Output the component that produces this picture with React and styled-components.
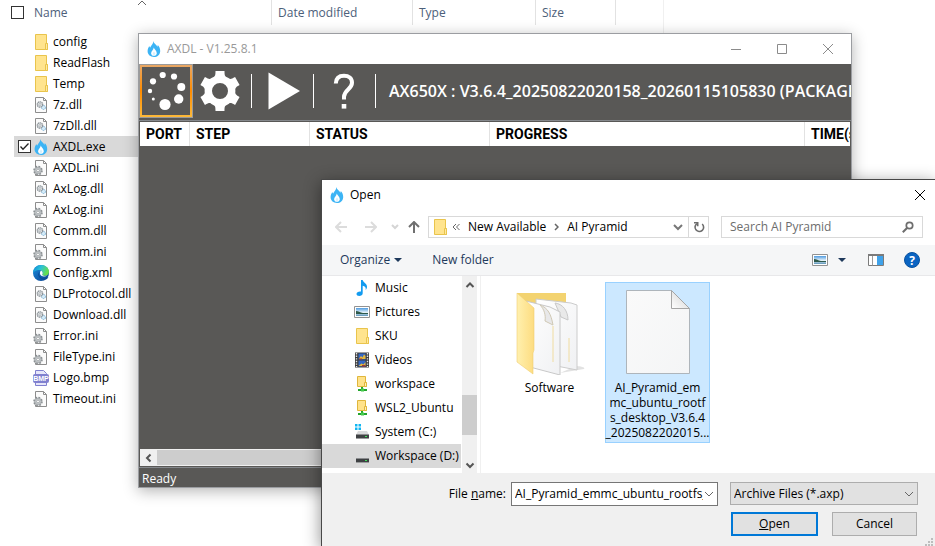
import React from "react";
import styled, { createGlobalStyle, css } from "styled-components";

const GlobalStyle = createGlobalStyle`
  * { box-sizing: border-box; }
  body {
    margin: 0;
    overflow: hidden;
    background: #fff;
    color: #000;
    font: 12px/16px "Open Sans", "Noto Sans", sans-serif;
  }
  button, input, select { font: inherit; color: inherit; margin: 0; }
  svg { display: block; flex: none; }
`;

/* ---------- Icons ---------- */

const FlameIcon = () => (
  <svg width="14" height="16" viewBox="0 0 14 16" aria-hidden="true">
    <path d="M6.2 0c.6 2.6 3.2 3.6 4.2 5.8.3-.5.4-1.200.3-1.800C12.400 5.600 13.300 8 13.200 10.200 13 13.800 10.300 16 7 16 3.500 16 .6 13.800.6 10.300.5 8 1.600 6.500 2.200 5c.3.7.6 1.200 1.100 1.600C4 4.300 6.500 3 6.200 0z" fill="#3cb4f5" />
    <path d="M6.800 6.500c.3 1.900 3 3.200 3 5.700 0 1.500-1.200 2.600-2.800 2.600s-2.900-1-2.900-2.600c0-2.200 2.500-3.300 2.700-5.700z" fill="#fff" />
    <path d="M7 10.200c.2 1 1.300 1.400 1.300 2.600 0 .7-.6 1.200-1.300 1.200s-1.300-.5-1.300-1.200c0-1.100 1.100-1.600 1.300-2.600z" fill="#d4effd" />
  </svg>
);

const FolderIcon = () => (
  <svg width="16" height="16" viewBox="0 0 16 16" aria-hidden="true">
    <path d="M2.500.5h11v9h1v6h-12z" fill="#ffe48e" stroke="#e9c44c" />
    <path d="M12.500 9.500h2v6h-2z" fill="#ffe9a2" stroke="#e9c44c" />
  </svg>
);

const Sheet = () => (
  <path d="M2.500.5h8l3 3v12h-11zM10.500.5v3h3" fill="#fbfbfb" stroke="#8d8d8d" />
);

const DllIcon = () => (
  <svg width="16" height="16" viewBox="0 0 16 16" aria-hidden="true">
    <Sheet />
    <circle cx="10.500" cy="10.500" r="2" fill="#d4ebf8" stroke="#7fb2d6" strokeDasharray="1.500 .6" />
    <circle cx="7" cy="7.500" r="2.700" fill="#e4e8ea" stroke="#8b9297" strokeWidth="1.300" strokeDasharray="1.500 .5" />
    <circle cx="7" cy="7.500" r="1" fill="#fff" stroke="#8b9297" strokeWidth=".6" />
  </svg>
);

const IniIcon = () => (
  <svg width="16" height="16" viewBox="0 0 16 16" aria-hidden="true">
    <Sheet />
    <circle cx="5" cy="10.500" r="4" fill="#c5c9cb" stroke="#8b9093" strokeWidth="1.600" strokeDasharray="1.700 1.440" />
    <circle cx="5" cy="10.500" r="3" fill="#cdd1d3" stroke="#979c9f" strokeWidth=".6" />
    <circle cx="5" cy="10.500" r="1.400" fill="#fff" stroke="#8b9093" strokeWidth=".7" />
  </svg>
);

const EdgeIcon = () => (
  <svg width="16" height="16" viewBox="0 0 16 16" aria-hidden="true">
    <defs>
      <linearGradient id="edge-top" x1="0" y1="0" x2="1" y2=".4">
        <stop offset="0" stopColor="#0a84d4" />
        <stop offset=".5" stopColor="#2bc0d8" />
        <stop offset="1" stopColor="#68e04b" />
      </linearGradient>
      <linearGradient id="edge-low" x1="0" y1="0" x2="1" y2="1">
        <stop offset="0" stopColor="#1a8ddf" />
        <stop offset="1" stopColor="#0b3f8c" />
      </linearGradient>
    </defs>
    <circle cx="8" cy="8" r="8" fill="url(#edge-low)" />
    <path d="M0 8C.3 3.400 3.700 0 8.200 0 12.700 0 16 3.200 16 6.800c0 2.500-1.900 4-4.200 4-1.600 0-2.700-.5-2.700-1.100 0-.4.600-.6.600-1.800C9.700 6.200 8.200 5 6 5 3 5 1 6.400 0 8z" fill="url(#edge-top)" />
    <path d="M6.500 7c-1.500 3 .7 6.300 4 6.400 1.900.1 3.300-.6 4.400-1.400.3-.2.500.1.300.4-.4.700-1 1.300-1.700 1.900-3 .8-6.800-.2-8-3.200C5 9.500 5.400 8 6.500 7z" fill="#0c4a96" />
    <path d="M9.700 7.900c0-1-.8-2-1.700-2.400C6.500 7 6.600 9.600 8.300 10.800c1.600 1.100 4.300.9 6.200-.3-2 .700-5.500.6-5.400-.9.200-.4.600-.5.600-1.700z" fill="#fff" />
  </svg>
);

const BmpIcon = () => (
  <svg width="16" height="16" viewBox="0 0 16 16" aria-hidden="true">
    <path d="M2.500 5V.5h8l3 3V5M2.500 13v2.500h11V13" fill="#e6e6fa" stroke="#8080cf" />
    <rect x="0" y="4" width="16" height="9" rx="2" fill="#8080cf" />
    <text x="8" y="11" textAnchor="middle" fontFamily="Liberation Sans, sans-serif" fontWeight="700" fontSize="7" fill="#fff">BMP</text>
  </svg>
);

const MusicIcon = () => (
  <svg width="16" height="16" viewBox="0 0 16 16" aria-hidden="true">
    <path d="M7 0h1.700c.2 2.500 4.300 3.300 4.300 6.700 0 1.400-.5 2.400-1.300 3.300.5-2.400-.8-3.800-3-4.200v7.400C8.700 15 7 16 5.300 16S2.500 15.200 2.500 14c0-1.600 2-2.800 4.500-2.400z" fill="#129bf0" />
  </svg>
);

const PictureIcon = () => (
  <svg width="16" height="12" viewBox="0 0 16 12" aria-hidden="true">
    <defs>
      <linearGradient id="pic-sky" x1="0" y1="0" x2="0" y2="1">
        <stop offset="0" stopColor="#4e9be0" />
        <stop offset=".55" stopColor="#e8f3fa" />
        <stop offset="1" stopColor="#5a93b8" />
      </linearGradient>
    </defs>
    <path d="M.5.5h15v11H.5z" fill="#fff" stroke="#929292" />
    <path d="M2 2h12v8H2z" fill="url(#pic-sky)" />
    <path d="M2 5c2.500 0 4 1.600 7 1.900 2 .2 3.500.1 5 .1v1H2z" fill="#2e5a4b" />
  </svg>
);

const VideoIcon = () => (
  <svg width="16" height="16" viewBox="0 0 16 16" aria-hidden="true">
    <path d="M1 .5h14v15H1z" fill="#3c3c3c" />
    <path d="M2.500 1v14M13.500 1v14" stroke="#e8e8e8" strokeWidth="1.400" strokeDasharray="1.400 1.200" />
    <path d="M4.500 1.500h7v6h-7zM4.500 8.500h7v6h-7z" fill="#3568c4" />
    <path d="M5 6.500l2-2.500 1.500 1.500L10 2.500l1.500 1.500v3H5zM5 13.500l2.500-2 2 1 2-2.500v4H5z" fill="#e6b73a" />
    <path d="M5 6.500h3v1H5zM8 13h3.500v1.500H8z" fill="#a43b30" />
  </svg>
);

const NetFolderIcon = () => (
  <svg width="16" height="16" viewBox="0 0 16 16" aria-hidden="true">
    <path d="M3.500.5h8v6h1v4h-9z" fill="#ffe28a" stroke="#e0b63c" />
    <path d="M10.500 6.500h2v4h-2z" fill="#fff0b8" stroke="#e0b63c" />
    <path d="M8 11v3M4 14h9" stroke="#23a52c" strokeWidth="2" />
    <path d="M7 12.500h3v3H7z" fill="#45c94b" />
  </svg>
);

const DriveIcon = ({ system }) => (
  <svg width="16" height="16" viewBox="0 0 16 16" aria-hidden="true">
    <path d="M4 7h9l2 4H2z" fill="#d9dadb" />
    <path d="M2 10.500h13V14H2z" fill="#3e4143" />
    <path d="M2 14h13v1H2z" fill="#9a9c9d" />
    <path d="M11 12h2v1h-2z" fill="#3fe05b" />
    {system && (
      <path d="M1 0h2.500v2.500H1zM4.500 0H7v2.500H4.500zM1 3.500h2.500V6H1zM4.500 3.500H7V6H4.500z" fill="#10b6f2" />
    )}
  </svg>
);

const CheckMark = () => (
  <svg width="11" height="11" viewBox="0 0 11 11" aria-hidden="true">
    <path d="M1.500 5.500L4 8.200 9.500 2.500" fill="none" stroke="#222" strokeWidth="1.300" />
  </svg>
);

const DotsIcon = () => (
  <svg width="48" height="48" viewBox="142 67 48 48" fill="#fff" aria-hidden="true">
    <circle cx="162.700" cy="75" r="3.100" />
    <circle cx="174" cy="76.500" r="3.100" />
    <circle cx="153" cy="81.300" r="3.100" />
    <circle cx="181.300" cy="87" r="4" />
    <circle cx="150" cy="91" r="2.200" />
    <circle cx="153.300" cy="99" r="1.500" />
    <circle cx="178.700" cy="99" r="4.700" />
    <circle cx="165" cy="104.500" r="5.600" />
  </svg>
);

const GearIcon = () => (
  <svg width="40" height="40" viewBox="-20 -20 40 40" aria-hidden="true">
    <circle r="11.700" fill="none" stroke="#fff" strokeWidth="7.400" />
    {[0, 60, 120, 180, 240, 300].map((a) => (
      <path key={a} transform={`rotate(${a})`} d="M-6.500-13.500C-4.800-15-4.500-16-4.500-20h9c0 4 .3 5 2 6.500z" fill="#fff" />
    ))}
  </svg>
);

const PlayIcon = () => (
  <svg width="36" height="38" viewBox="0 0 36 38" aria-hidden="true">
    <path d="M4.500 .500L36 19 4.500 37.500z" fill="#fff" />
  </svg>
);

const HelpIcon = () => (
  <svg width="22" height="36" viewBox="0 0 22 36" aria-hidden="true">
    <path d="M2.800 10.500C3 5.500 6 2.800 11 2.800c4.700 0 8 2.500 8 7 0 6.500-8 7-8 14.200v2.500" fill="none" stroke="#fff" strokeWidth="4" />
    <path d="M8.700 31h4.600v4.600H8.700z" fill="#fff" />
  </svg>
);

const Glyph = ({ d, w = 12, h = 12, color = "#666", weight = 1 }) => (
  <svg width={w} height={h} viewBox={`0 0 ${w} ${h}`} fill="none" stroke={color} strokeWidth={weight} aria-hidden="true">
    <path d={d} />
  </svg>
);

const chevronDown = "M2 4L6 8L10 4";

const SearchIcon = () => (
  <svg width="12" height="12" viewBox="0 0 12 12" fill="none" stroke="#6d6d6d" aria-hidden="true">
    <circle cx="7.500" cy="4.500" r="3.200" strokeWidth="1.700" />
    <path d="M5 7L.8 11.200" strokeWidth="2" />
  </svg>
);

const RefreshIcon = () => (
  <svg width="12" height="12" viewBox="0 0 12 12" fill="none" stroke="#6d6d6d" strokeWidth="1.600" aria-hidden="true">
    <path d="M9.200 3A4.300 4.300 0 1 1 4 2.600" />
    <path d="M1 1.800h3.700v3.500" />
  </svg>
);

const PaneIcon = () => (
  <svg width="16" height="12" viewBox="0 0 16 12" aria-hidden="true">
    <path d="M.5.5h15v11H.5z" fill="#fff" stroke="#7b7b7b" />
    <path d="M0 0h16v2H0z" fill="#7b7b7b" />
    <path d="M4.500 2v9.500" stroke="#9b9b9b" />
    <path d="M9 2h6v9H9z" fill="#3fa2ea" />
  </svg>
);

const HelpBadge = () => (
  <svg width="16" height="16" viewBox="0 0 16 16" aria-hidden="true">
    <circle cx="8" cy="8" r="7.500" fill="#0a64c2" stroke="#08519f" />
    <text x="8" y="12.500" textAnchor="middle" fontFamily="Open Sans, sans-serif" fontWeight="700" fontSize="12" fill="#fff">?</text>
  </svg>
);

const OpenFolderArt = () => (
  <svg width="70" height="86" viewBox="-1 -4 70 86" aria-hidden="true">
    <defs>
      <linearGradient id="flap" x1="0" y1="0" x2="1" y2="0">
        <stop offset="0" stopColor="#fff0ae" />
        <stop offset="1" stopColor="#fddc80" />
      </linearGradient>
      <linearGradient id="paper" x1="0" y1="0" x2="1" y2="1">
        <stop offset="0" stopColor="#fff" />
        <stop offset="1" stopColor="#f0f1f3" />
      </linearGradient>
    </defs>
    <path d="M44 80l24-4c2-2-6-3-8-3z" fill="#e2e2e2" />
    <path d="M1 0h49v68H1z" fill="#f3d370" />
    <path d="M20 6l35 4 6 2v65l-41-8z" fill="url(#paper)" stroke="#ccc" />
    <path d="M39 10c8 1 13 8 13 17l-7-3z" fill="#e9e9e9" stroke="#c9c9c9" />
    <path d="M53 45v24" stroke="#f0dca0" />
    <path d="M10 8l24 6 10 5v63L10 73z" fill="url(#paper)" stroke="#c8c8c8" />
    <path d="M24 12c8 3 11 9 13 20l-8-4c1-6-1-12-5-16z" fill="#e8e8e9" stroke="#d0c9b5" />
    <path d="M37 33v36" stroke="#f0dca0" />
    <path d="M1 0l17 15v42l-1 3v21L1 69z" fill="url(#flap)" stroke="#f0ce72" strokeWidth=".6" />
  </svg>
);

const BlankFileArt = () => (
  <svg width="64" height="86" viewBox="0 0 64 86" aria-hidden="true">
    <defs>
      <linearGradient id="sheet" x1="0" y1="0" x2="1" y2="1">
        <stop offset="0" stopColor="#fafafa" />
        <stop offset="1" stopColor="#f4f5f6" />
      </linearGradient>
      <linearGradient id="fold" x1="0" y1="1" x2="1" y2="0">
        <stop offset="0" stopColor="#fff" />
        <stop offset="1" stopColor="#cfcfcf" />
      </linearGradient>
    </defs>
    <path d="M.5 1.500h45l18 18v65H.5z" fill="url(#sheet)" stroke="#aeb5bb" />
    <path d="M45.500 1.500v18h18z" fill="url(#fold)" stroke="#a5a5a5" />
  </svg>
);

/* ---------- Explorer ---------- */

const Desktop = styled.main`
  position: relative;
  min-height: 100vh;
  overflow: hidden;
`;

const ExplorerPane = styled.section`
  width: 71%;
  min-height: 100vh;
  border-right: 1px solid #f0f0f0;
`;

const FileTable = styled.table`
  width: 616px;
  table-layout: fixed;
  border-collapse: collapse;
  th, td { padding: 0; text-align: left; font-weight: 400; }
  th { height: 31px; vertical-align: top; }
`;

const ColumnTitle = styled.div`
  display: flex;
  align-items: center;
  height: 25px;
  gap: 10px;
  padding-left: ${(p) => (p.$first ? "11px" : "6px")};
  border-right: 1px solid #e2e2e2;
  color: #4c607a;
`;

const SortCaret = styled.span`
  position: absolute;
  left: 137px;
  top: 0;
`;

const CheckLabel = styled.label`
  display: grid;
  place-items: center;
  width: 13px;
  height: 13px;
  > * { grid-area: 1 / 1; }
  svg { pointer-events: none; }
`;

const TickBox = styled.input`
  appearance: none;
  width: 13px;
  height: 13px;
  border: 1px solid #333;
  background: #fff;
`;

const FileCell = styled.div`
  display: flex;
  align-items: center;
  height: 21px;
  padding-left: ${(p) => (p.$selected ? "4px" : "19px")};
  background: ${(p) => (p.$selected ? "#d9d9d9" : "transparent")};
  gap: 4px;
  ${CheckLabel} { margin-right: -2px; }
`;

const FlameSlot = styled.span`
  display: grid;
  place-items: center;
  width: 16px;
`;

const FileFlame = () => <FlameSlot><FlameIcon /></FlameSlot>;

const files = [
  ["config", FolderIcon], ["ReadFlash", FolderIcon], ["Temp", FolderIcon],
  ["7z.dll", DllIcon], ["7zDll.dll", DllIcon], ["AXDL.exe", FileFlame, true],
  ["AXDL.ini", IniIcon], ["AxLog.dll", DllIcon], ["AxLog.ini", IniIcon],
  ["Comm.dll", DllIcon], ["Comm.ini", IniIcon], ["Config.xml", EdgeIcon],
  ["DLProtocol.dll", DllIcon], ["Download.dll", DllIcon], ["Error.ini", IniIcon],
  ["FileType.ini", IniIcon], ["Logo.bmp", BmpIcon], ["Timeout.ini", IniIcon],
];

const Tick = ({ label, checked }) => (
  <CheckLabel>
    <TickBox type="checkbox" aria-label={label} defaultChecked={checked} />
    {checked && <CheckMark />}
  </CheckLabel>
);

const Explorer = () => (
  <ExplorerPane>
    <FileTable>
      <colgroup>
        <col width="14" /><col width="258" /><col width="141" /><col width="123" /><col width="80" />
      </colgroup>
      <thead>
        <tr>
          <th colSpan={2}>
            <ColumnTitle $first><Tick label="Select all" />Name</ColumnTitle>
            <SortCaret><Glyph w={10} h={6} d="M1 5L5 1L9 5" /></SortCaret>
          </th>
          <th><ColumnTitle>Date modified</ColumnTitle></th>
          <th><ColumnTitle>Type</ColumnTitle></th>
          <th><ColumnTitle>Size</ColumnTitle></th>
        </tr>
      </thead>
      <tbody>
        {files.map(([name, Icon, selected]) => (
          <tr key={name}>
            <td />
            <td>
              <FileCell $selected={selected}>
                {selected && <Tick label={`Select ${name}`} checked />}
                <Icon />
                {name}
              </FileCell>
            </td>
          </tr>
        ))}
      </tbody>
    </FileTable>
  </ExplorerPane>
);

/* ---------- AXDL window ---------- */

const AppWindow = styled.section`
  position: absolute;
  left: 138px;
  right: 83px;
  top: 33px;
  height: 455px;
  display: flex;
  flex-direction: column;
  border: 1px solid #9b9da1;
  background: #595856;
  box-shadow: 0 3px 14px rgba(0, 0, 0, 0.3);
`;

const TitleBar = styled.header`
  display: flex;
  align-items: center;
  flex: none;
  height: 30px;
  padding-left: 8px;
  gap: 6px;
  background: #fff;
  color: ${(p) => (p.$inactive ? "#999" : "#000")};
`;

const Grow = styled.span`
  flex: 1;
`;

const CaptionButtons = styled.div`
  display: flex;
`;

const CaptionButton = styled.button`
  display: grid;
  place-items: center;
  width: ${(p) => (p.$narrow ? "30px" : "46px")};
  height: 30px;
  padding: 0;
  border: 0;
  background: none;
`;

const ToolStrip = styled.div`
  display: flex;
  flex: none;
  height: 57px;
  border-bottom: 1px solid #85888c;
`;

const ToolButton = styled.button`
  display: grid;
  place-items: center;
  width: 54px;
  height: 54px;
  padding: 0;
  border: 0;
  background: none;
  ${(p) => p.$active && css`
    border: 3px solid;
    border-image: linear-gradient(#e8a868, #ff8c00 50%, #fdbb3c) 3;
    outline: 1px solid #9a9a9a;
    outline-offset: -1px;
  `}
`;

const ToolDivider = styled.span`
  width: 1px;
  height: 34px;
  margin: 10px 3px 0 4px;
  background: #fff;
`;

const PackageTitle = styled.div`
  flex: 1;
  min-width: 0;
  padding-left: 10px;
  overflow: hidden;
  white-space: nowrap;
  color: #fff;
  font-size: 16px;
  line-height: 54px;
  font-weight: 600;
`;

const GridFrame = styled.div`
  flex: 1;
  display: flex;
  flex-direction: column;
  margin: 1px 1px 0;
  overflow: hidden;
`;

const PortTable = styled.table`
  width: 100%;
  table-layout: fixed;
  border-collapse: separate;
  border-spacing: 0;
  background: #fff;
  th {
    height: 24px;
    padding: 0 0 0 6px;
    border-right: 1px solid #e2e2e2;
    text-align: left;
    overflow: hidden;
    white-space: nowrap;
    font: 700 14px/24px Roboto, sans-serif;
  }
  th:last-child { border-right: 0; }
`;

const BottomScroll = styled.div`
  display: flex;
  height: 17px;
  margin-top: auto;
  background: #cdcdcd;
  border-top: 1px solid #f0f0f0;
  border-bottom: 1px solid #f0f0f0;
`;

const ScrollButton = styled.button`
  display: grid;
  place-items: center;
  flex: none;
  width: ${(p) => (p.$tall ? "15px" : "17px")};
  height: ${(p) => (p.$tall ? "17px" : "15px")};
  padding: 0;
  border: 0;
  background: #f0f0f0;
`;

const StatusBar = styled.footer`
  flex: none;
  height: 20px;
  margin-top: 1px;
  padding-left: 3px;
  border-top: 1px solid #85888c;
  color: #fff;
  line-height: 22px;
`;

const AxdlWindow = () => (
  <AppWindow aria-label="AXDL">
    <TitleBar $inactive>
      <FlameIcon />
      AXDL - V1.25.8.1
      <Grow />
      <CaptionButtons>
        <CaptionButton aria-label="Minimize"><Glyph d="M1 6.500h10" color="#8b8b8b" /></CaptionButton>
        <CaptionButton aria-label="Maximize"><Glyph d="M1.500 1.500h9v9h-9z" color="#8b8b8b" /></CaptionButton>
        <CaptionButton aria-label="Close"><Glyph d="M1 1l10 10M11 1L1 11" color="#8b8b8b" /></CaptionButton>
      </CaptionButtons>
    </TitleBar>
    <ToolStrip>
      <ToolButton $active aria-label="Load package"><DotsIcon /></ToolButton>
      <ToolButton aria-label="Settings"><GearIcon /></ToolButton>
      <ToolDivider />
      <ToolButton aria-label="Start"><PlayIcon /></ToolButton>
      <ToolDivider />
      <ToolButton aria-label="Help"><HelpIcon /></ToolButton>
      <ToolDivider />
      <PackageTitle>AX650X : V3.6.4_20250822020158_20260115105830 (PACKAGE)</PackageTitle>
    </ToolStrip>
    <GridFrame>
      <PortTable>
        <colgroup>
          <col width="50" /><col width="120" /><col width="180" /><col /><col width="45" />
        </colgroup>
        <thead>
          <tr><th>PORT</th><th>STEP</th><th>STATUS</th><th>PROGRESS</th><th>TIME(s)</th></tr>
        </thead>
      </PortTable>
      <BottomScroll>
        <ScrollButton aria-label="Scroll left"><Glyph d="M7.500 2.500L4 6L7.500 9.500" weight={2} color="#555" /></ScrollButton>
      </BottomScroll>
    </GridFrame>
    <StatusBar>Ready</StatusBar>
  </AppWindow>
);

/* ---------- Open dialog ---------- */

const Dialog = styled.section`
  position: absolute;
  left: 321px;
  right: 0;
  top: 179px;
  bottom: 0;
  display: flex;
  flex-direction: column;
  border: 1px solid #484848;
  border-width: 1px 0 0 1px;
  background: #fff;
  box-shadow: 0 4px 16px rgba(0, 0, 0, 0.45);
`;

const NavRow = styled.div`
  display: grid;
  grid-template-columns: 97px minmax(0, 281fr) 12px minmax(0, 202fr);
  flex: none;
  height: 22px;
  margin: 6px 12px 7px 9px;
`;

const History = styled.div`
  display: grid;
  grid-template-columns: 20px 40px 8px 29px;
`;

const NavButton = styled.button`
  display: grid;
  place-items: center;
  min-width: 0;
  height: 22px;
  padding: 0;
  border: 0;
  background: none;
`;

const AddressBar = styled.div`
  display: flex;
  align-items: center;
  height: 22px;
  padding-left: 3px;
  border: 1px solid #d9d9d9;
`;

const Crumb = styled.button`
  padding: 0 4px;
  border: 0;
  background: none;
  white-space: nowrap;
`;

const CrumbChevron = styled.span`
  padding: 0 4px;
`;

const AddressButton = styled(NavButton)`
  width: 20px;
  height: 20px;
  border-left: ${(p) => (p.$divided ? "1px solid #d9d9d9" : "0")};
`;

const SearchBox = styled.label`
  display: flex;
  align-items: center;
  grid-column: 4;
  height: 22px;
  padding: 0 8px;
  border: 1px solid #d9d9d9;
`;

const PlainInput = styled.input`
  flex: 1;
  min-width: 0;
  padding: 0;
  border: 0;
  outline: 0;
  background: none;
  &::placeholder { color: #6d6d6d; opacity: 1; }
`;

const CommandBar = styled.div`
  display: flex;
  align-items: center;
  flex: none;
  height: 31px;
  padding: 0 15px 0 18px;
  background: #f5f6f7;
  border-bottom: 1px solid #e8e8ea;
  color: #1e395b;
`;

const Command = styled.button`
  display: flex;
  align-items: center;
  gap: 4px;
  padding: 0;
  margin-right: ${(p) => (p.$gap ? `${p.$gap}px` : "0")};
  border: 0;
  background: none;
`;

const Triangle = () => (
  <svg width="8" height="4" viewBox="0 0 8 4" aria-hidden="true"><path d="M0 0h8L4 4z" fill="#1e395b" /></svg>
);

const Browser = styled.div`
  display: flex;
  flex: none;
  height: 197px;
`;

const Tree = styled.ul`
  width: 139px;
  margin: 0;
  padding: 0;
  list-style: none;
`;

const TreeItem = styled.li`
  display: flex;
  align-items: center;
  height: 24px;
  padding-left: 32px;
  gap: 5px;
  white-space: nowrap;
  background: ${(p) => (p.$selected ? "#d9d9d9" : "transparent")};
`;

const TreeScroll = styled.div`
  display: flex;
  flex-direction: column;
  width: 15px;
  margin-left: 1px;
  background: #f0f0f0;
`;

const TreeThumb = styled.div`
  height: 40px;
  margin: auto 0 21px;
  background: #cdcdcd;
`;

const FileGrid = styled.div`
  display: flex;
  flex: 1;
  align-items: flex-start;
  gap: 3px;
  margin-left: 3px;
  padding: 6px 0 0 16px;
  border-left: 1px solid #f0f0f0;
`;

const Tile = styled.button`
  display: flex;
  flex-direction: column;
  align-items: center;
  width: 105px;
  height: 161px;
  padding: 6px 0 0;
  border: 1px solid ${(p) => (p.$selected ? "#99d1ff" : "transparent")};
  background: ${(p) => (p.$selected ? "#cce8ff" : "none")};
  line-height: 15px;
  svg { margin-bottom: 5px; }
`;

const TileName = styled.span`
  white-space: nowrap;
`;

const FormArea = styled.form`
  display: grid;
  flex: 1;
  grid-template-columns: 185px minmax(0, 211fr) minmax(0, 200fr);
  grid-template-rows: 24px 24px;
  align-content: start;
  row-gap: 6px;
  padding: 9px 17px 0 0;
  background: #f0f0f0;
`;

const FieldLabel = styled.label`
  padding-right: 1px;
  text-align: right;
  line-height: 24px;
`;

const ComboBox = styled.div`
  display: flex;
  align-items: center;
  margin-left: 4px;
  padding: 0 2px 0 3px;
  border: 1px solid #767676;
  background: #fff;
`;

const ComboArrow = styled.button`
  display: grid;
  place-items: center;
  width: 12px;
  padding: 0;
  border: 0;
  background: none;
`;

const SelectBox = styled.div`
  display: grid;
  align-items: center;
  height: 23px;
  margin-left: 12px;
  > * { grid-area: 1 / 1; }
  svg { justify-self: end; margin-right: 3px; pointer-events: none; }
`;

const TypeSelect = styled.select`
  appearance: none;
  width: 100%;
  height: 23px;
  padding: 0 20px 0 3px;
  border: 1px solid #adadad;
  border-radius: 0;
  background: #e1e1e1;
`;

const Actions = styled.div`
  display: flex;
  grid-column: 3;
  gap: 14px;
  margin: 0 1px 0 13px;
`;

const DialogButton = styled.button`
  flex: 1;
  padding: 0;
  border: ${(p) => (p.$primary ? "2px solid #0078d7" : "1px solid #adadad")};
  background: #e1e1e1;
`;

const Grip = styled.span`
  position: absolute;
  right: 2px;
  bottom: 0;
`;

const SystemDrive = () => <DriveIcon system />;

const places = [
  ["Music", MusicIcon], ["Pictures", PictureIcon], ["SKU", FolderIcon], ["Videos", VideoIcon],
  ["workspace", NetFolderIcon], ["WSL2_Ubuntu", NetFolderIcon],
  ["System (C:)", SystemDrive], ["Workspace (D:)", DriveIcon, true],
];

const OpenFileDialog = () => (
  <Dialog role="dialog" aria-label="Open">
    <TitleBar>
      <FlameIcon />
      Open
      <Grow />
      <CaptionButton $narrow aria-label="Close"><Glyph d="M1 1l10 10M11 1L1 11" color="#000" /></CaptionButton>
    </TitleBar>
    <NavRow>
      <History>
        <NavButton aria-label="Back"><Glyph d="M12 6H1M6 1L1 6l5 5" color="#dcdcdc" weight={2} /></NavButton>
        <NavButton aria-label="Forward"><Glyph d="M0 6h11M6 1l5 5-5 5" color="#dcdcdc" weight={2} /></NavButton>
        <NavButton aria-label="Recent locations"><Glyph w={8} h={6} d="M1 1l3 3 3-3" color="#d5d5d5" weight={2} /></NavButton>
        <NavButton aria-label="Up"><Glyph d="M6 12V1M1 6l5-5 5 5" color="#707070" weight={2} /></NavButton>
      </History>
      <AddressBar>
        <FolderIcon />
        <Crumb aria-label="Parent folders"><Glyph w={8} h={8} d="M4 1L1 4l3 3M7.500 1l-3 3 3 3" /></Crumb>
        <Crumb>New Available</Crumb>
        <CrumbChevron><Glyph w={5} h={8} d="M1 1l3 3-3 3" weight={1.500} /></CrumbChevron>
        <Crumb>AI Pyramid</Crumb>
        <Grow />
        <AddressButton aria-label="Previous locations"><Glyph w={10} h={8} d="M1 2l4 4 4-4" weight={2} color="#777" /></AddressButton>
        <AddressButton $divided aria-label="Refresh"><RefreshIcon /></AddressButton>
      </AddressBar>
      <SearchBox>
        <PlainInput placeholder="Search AI Pyramid" aria-label="Search AI Pyramid" />
        <SearchIcon />
      </SearchBox>
    </NavRow>
    <CommandBar>
      <Command $gap={30}>Organize<Triangle /></Command>
      <Command>New folder</Command>
      <Grow />
      <Command $gap={10} aria-label="View"><PictureIcon /></Command>
      <Command $gap={22} aria-label="More view options"><Triangle /></Command>
      <Command $gap={20} aria-label="Preview pane"><PaneIcon /></Command>
      <Command aria-label="Help"><HelpBadge /></Command>
    </CommandBar>
    <Browser>
      <Tree>
        {places.map(([name, Icon, selected]) => (
          <TreeItem key={name} $selected={selected}><Icon />{name}</TreeItem>
        ))}
      </Tree>
      <TreeScroll>
        <ScrollButton $tall aria-label="Scroll up"><Glyph d="M2.500 8L6 4.500L9.500 8" weight={2} color="#555" /></ScrollButton>
        <TreeThumb />
        <ScrollButton $tall aria-label="Scroll down"><Glyph d="M2.500 4.500L6 8L9.500 4.500" weight={2} color="#555" /></ScrollButton>
      </TreeScroll>
      <FileGrid>
        <Tile><OpenFolderArt />Software</Tile>
        <Tile $selected>
          <BlankFileArt />
          <TileName>
            AI_Pyramid_em<br />mc_ubuntu_rootf<br />s_desktop_V3.6.4<br />_2025082202015...
          </TileName>
        </Tile>
      </FileGrid>
    </Browser>
    <FormArea onSubmit={(e) => e.preventDefault()}>
      <FieldLabel htmlFor="file-name">File <u>n</u>ame:</FieldLabel>
      <ComboBox>
        <PlainInput id="file-name" defaultValue="AI_Pyramid_emmc_ubuntu_rootfs_" />
        <ComboArrow type="button" aria-label="Recent file names"><Glyph d={chevronDown} /></ComboArrow>
      </ComboBox>
      <SelectBox>
        <TypeSelect aria-label="File type"><option>Archive Files (*.axp)</option></TypeSelect>
        <Glyph d={chevronDown} />
      </SelectBox>
      <Actions>
        <DialogButton $primary><u>O</u>pen</DialogButton>
        <DialogButton type="button">Cancel</DialogButton>
      </Actions>
    </FormArea>
    <Grip>
      <svg width="8" height="8" viewBox="0 0 8 8" fill="#bdbdbd" aria-hidden="true">
        <path d="M6 0h2v2H6zM3 3h2v2H3zM6 3h2v2H6zM0 6h2v2H0zM3 6h2v2H3zM6 6h2v2H6z" />
      </svg>
    </Grip>
  </Dialog>
);

export default function App() {
  return (
    <>
      <GlobalStyle />
      <Desktop>
        <Explorer />
        <AxdlWindow />
        <OpenFileDialog />
      </Desktop>
    </>
  );
}
